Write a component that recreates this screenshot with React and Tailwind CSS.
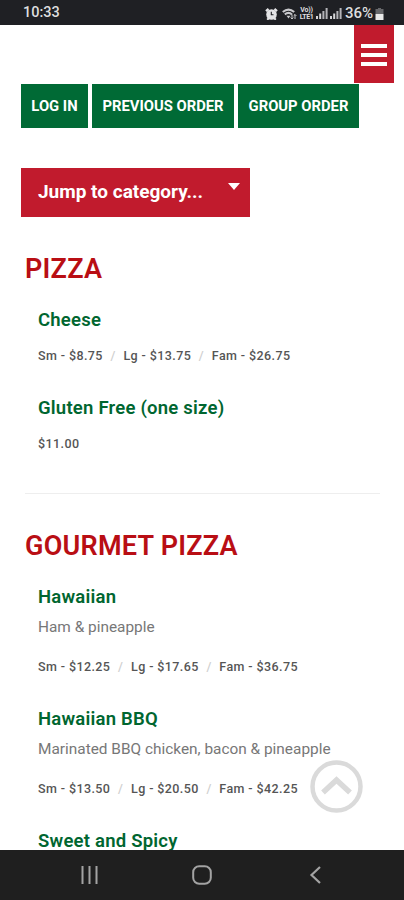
import React from "react";

const menu = [
  {
    name: "PIZZA",
    items: [
      { name: "Cheese", prices: ["Sm - $8.75", "Lg - $13.75", "Fam - $26.75"] },
      { name: "Gluten Free (one size)", prices: ["$11.00"] },
    ],
  },
  {
    name: "GOURMET PIZZA",
    items: [
      {
        name: "Hawaiian",
        description: "Ham & pineapple",
        prices: ["Sm - $12.25", "Lg - $17.65", "Fam - $36.75"],
      },
      {
        name: "Hawaiian BBQ",
        description: "Marinated BBQ chicken, bacon & pineapple",
        prices: ["Sm - $13.50", "Lg - $20.50", "Fam - $42.25"],
      },
      { name: "Sweet and Spicy", prices: [] },
    ],
  },
];

function AlarmIcon() {
  return (
    <svg width="13" height="12" viewBox="0 0 13 12">
      <path d="M1 3.2 3.6 1M12 3.2 9.4 1" stroke="#e4e4e6" strokeWidth="2.4" />
      <circle cx="6.5" cy="6.5" r="5.3" fill="#e4e4e6" />
      <path d="M6.3 3.8v3h2.2" fill="none" stroke="#1f2024" strokeWidth="1.1" />
      <path d="M2.2 11.8 4 10M10.8 11.8 9 10" stroke="#e4e4e6" strokeWidth="2" />
    </svg>
  );
}

function WifiIcon() {
  return (
    <svg width="15" height="12" viewBox="0 0 15 12" fill="none" stroke="#c9c9cc">
      <path d="M.8 4Q6.5 -.8 12.2 4" strokeWidth="2.2" />
      <path d="M2.8 6.4Q6.5 3.4 10 6.4" strokeWidth="2" />
      <path d="M4.5 7.7h4L6.5 10.4z" fill="#c9c9cc" stroke="none" />
      <path d="M10 6.5v4.5M8.600 9.600 10 11l1.400-1.400M13 11V6.500M11.600 7.900 13 6.500l1.400 1.400" strokeWidth="1" />
    </svg>
  );
}

function SignalIcon() {
  return (
    <svg width="12" height="11" viewBox="0 0 12 11" fill="#d6d6d8">
      <path d="M0 8h2v3H0zM3.2 5.5h2V11h-2z" />
      <path d="M6.4 3h2v8h-2zM9.6 0h2v11h-2z" fill="#b4b4b8" />
    </svg>
  );
}

function StatusBar() {
  return (
    <div className="flex h-[25px] shrink-0 items-center justify-between bg-[#1f2024] pr-5 pl-[23px] text-[#dededf]">
      <span className="pt-0.5 text-[14.5px] leading-none font-medium">10:33</span>
      <div className="flex items-center pt-0.5">
        <AlarmIcon />
        <div className="ml-1">
          <WifiIcon />
        </div>
        <div className="ml-0.5 flex w-[15px] flex-col items-center text-[7px] font-bold">
          <span className="leading-[7px] tracking-[-0.2px]">Vo))</span>
          <span className="leading-[7px] tracking-[-0.5px]">LTE1</span>
        </div>
        <div className="ml-0.5 flex gap-[2px]">
          <SignalIcon />
          <SignalIcon />
        </div>
        <span className="ml-[3px] w-[29px] text-[15px] leading-none font-medium">36%</span>
        <svg className="ml-px" width="9" height="12" viewBox="0 0 9 12">
          <path d="M3 0h3v1h2.5v5h-8V1H3z" fill="#66676a" />
          <path d="M.5 6h8v6h-8z" fill="#e8e8e8" />
        </svg>
      </div>
    </div>
  );
}

function Item({ item }) {
  return (
    <div className="pl-[13px]">
      <h3 className="h-6 text-[18.5px] leading-6 font-semibold tracking-[0.22px] text-[#006630]">
        {item.name}
      </h3>
      {item.description && (
        <p className="mt-2 -mb-[5px] h-5 text-[15.4px] leading-5 text-[#777777]">
          {item.description}
        </p>
      )}
      {item.prices.length > 0 && (
        <div className="mt-[14px] flex h-5 text-[12.5px] leading-5 font-medium tracking-[0.4px] text-[#555555] in-[.described]:mt-[25px]">
          {item.prices.map((price, index) => (
            <span key={price}>
              {index > 0 && <span className="mx-[7.7px] text-[#d0d0d0]">/</span>}
              {price}
            </span>
          ))}
        </div>
      )}
    </div>
  );
}

export default function App() {
  return (
    <div
      className="relative flex h-[900px] w-[404px] flex-col overflow-hidden bg-white"
      style={{ fontFamily: "Roboto, sans-serif" }}
    >
      <StatusBar />
      <main className="flex-1 overflow-hidden">
        <div className="flex justify-end pr-[10px]">
          <button className="flex h-[58px] w-10 flex-col items-center justify-center gap-[5px] bg-[#c11b2d] pt-0.5">
            <span className="h-1 w-[26px] bg-white" />
            <span className="h-1 w-[26px] bg-white" />
            <span className="h-1 w-[26px] bg-white" />
          </button>
        </div>
        <div className="mt-px flex gap-1 pl-[21px] text-[14.8px] font-bold text-white">
          <button className="h-11 w-[67px] bg-[#006a35]">LOG IN</button>
          <button className="h-11 w-[142px] bg-[#006a35]">PREVIOUS ORDER</button>
          <button className="h-11 w-[121px] bg-[#006a35]">GROUP ORDER</button>
        </div>
        <button className="mt-10 ml-[21px] flex h-[49px] w-[229px] items-center justify-between bg-[#c11b2d] pr-[10px] pl-[17px] text-[19px] font-bold text-white">
          <span className="pb-px">Jump to category...</span>
          <svg className="-mt-3" width="12" height="7" viewBox="0 0 12 7" fill="white">
            <path d="M0 0h12L6 7z" />
          </svg>
        </button>
        <div className="pr-6 pl-[25px]">
          {menu.map((category, index) => (
            <section
              key={category.name}
              className={index > 0 ? "mt-[39px] border-t border-[#eeeeee] pt-9" : "mt-9"}
            >
              <h2 className="h-8 text-[27px] leading-[33px] font-semibold tracking-[0.25px] text-[#b90e14]">
                {category.name}
              </h2>
              <div className="mt-[23px] flex flex-col gap-[30px]">
                {category.items.map((item) => (
                  <div key={item.name} className={item.description ? "described" : ""}>
                    <Item item={item} />
                  </div>
                ))}
              </div>
            </section>
          ))}
        </div>
      </main>
      <button className="absolute top-[760px] left-[310px]">
        <svg width="53" height="53" viewBox="0 0 53 53" fill="none" stroke="#dadada">
          <circle cx="26.5" cy="26.5" r="24" strokeWidth="4.5" />
          <path d="M13 32.500 26.500 20 40 32.500" strokeWidth="5.500" />
        </svg>
      </button>
      <nav className="flex h-[50px] shrink-0 items-center bg-[#1f1f1f] pb-px pl-[80px]">
        <svg width="19" height="18" viewBox="0 0 19 18" stroke="#a3a3a3" strokeWidth="2">
          <path d="M2.500 0v18M9.500 0v18M16.500 0v18" />
        </svg>
        <svg className="ml-[93px]" width="20" height="20" viewBox="0 0 20 20" fill="none">
          <rect x="1.200" y="1.200" width="17.600" height="17.600" rx="6" stroke="#a3a3a3" strokeWidth="2" />
        </svg>
        <svg className="ml-[97px]" width="13" height="18" viewBox="0 0 13 18" fill="none">
          <path d="M11 1 2.500 9l8.500 8" stroke="#a3a3a3" strokeWidth="2.200" />
        </svg>
      </nav>
    </div>
  );
}
